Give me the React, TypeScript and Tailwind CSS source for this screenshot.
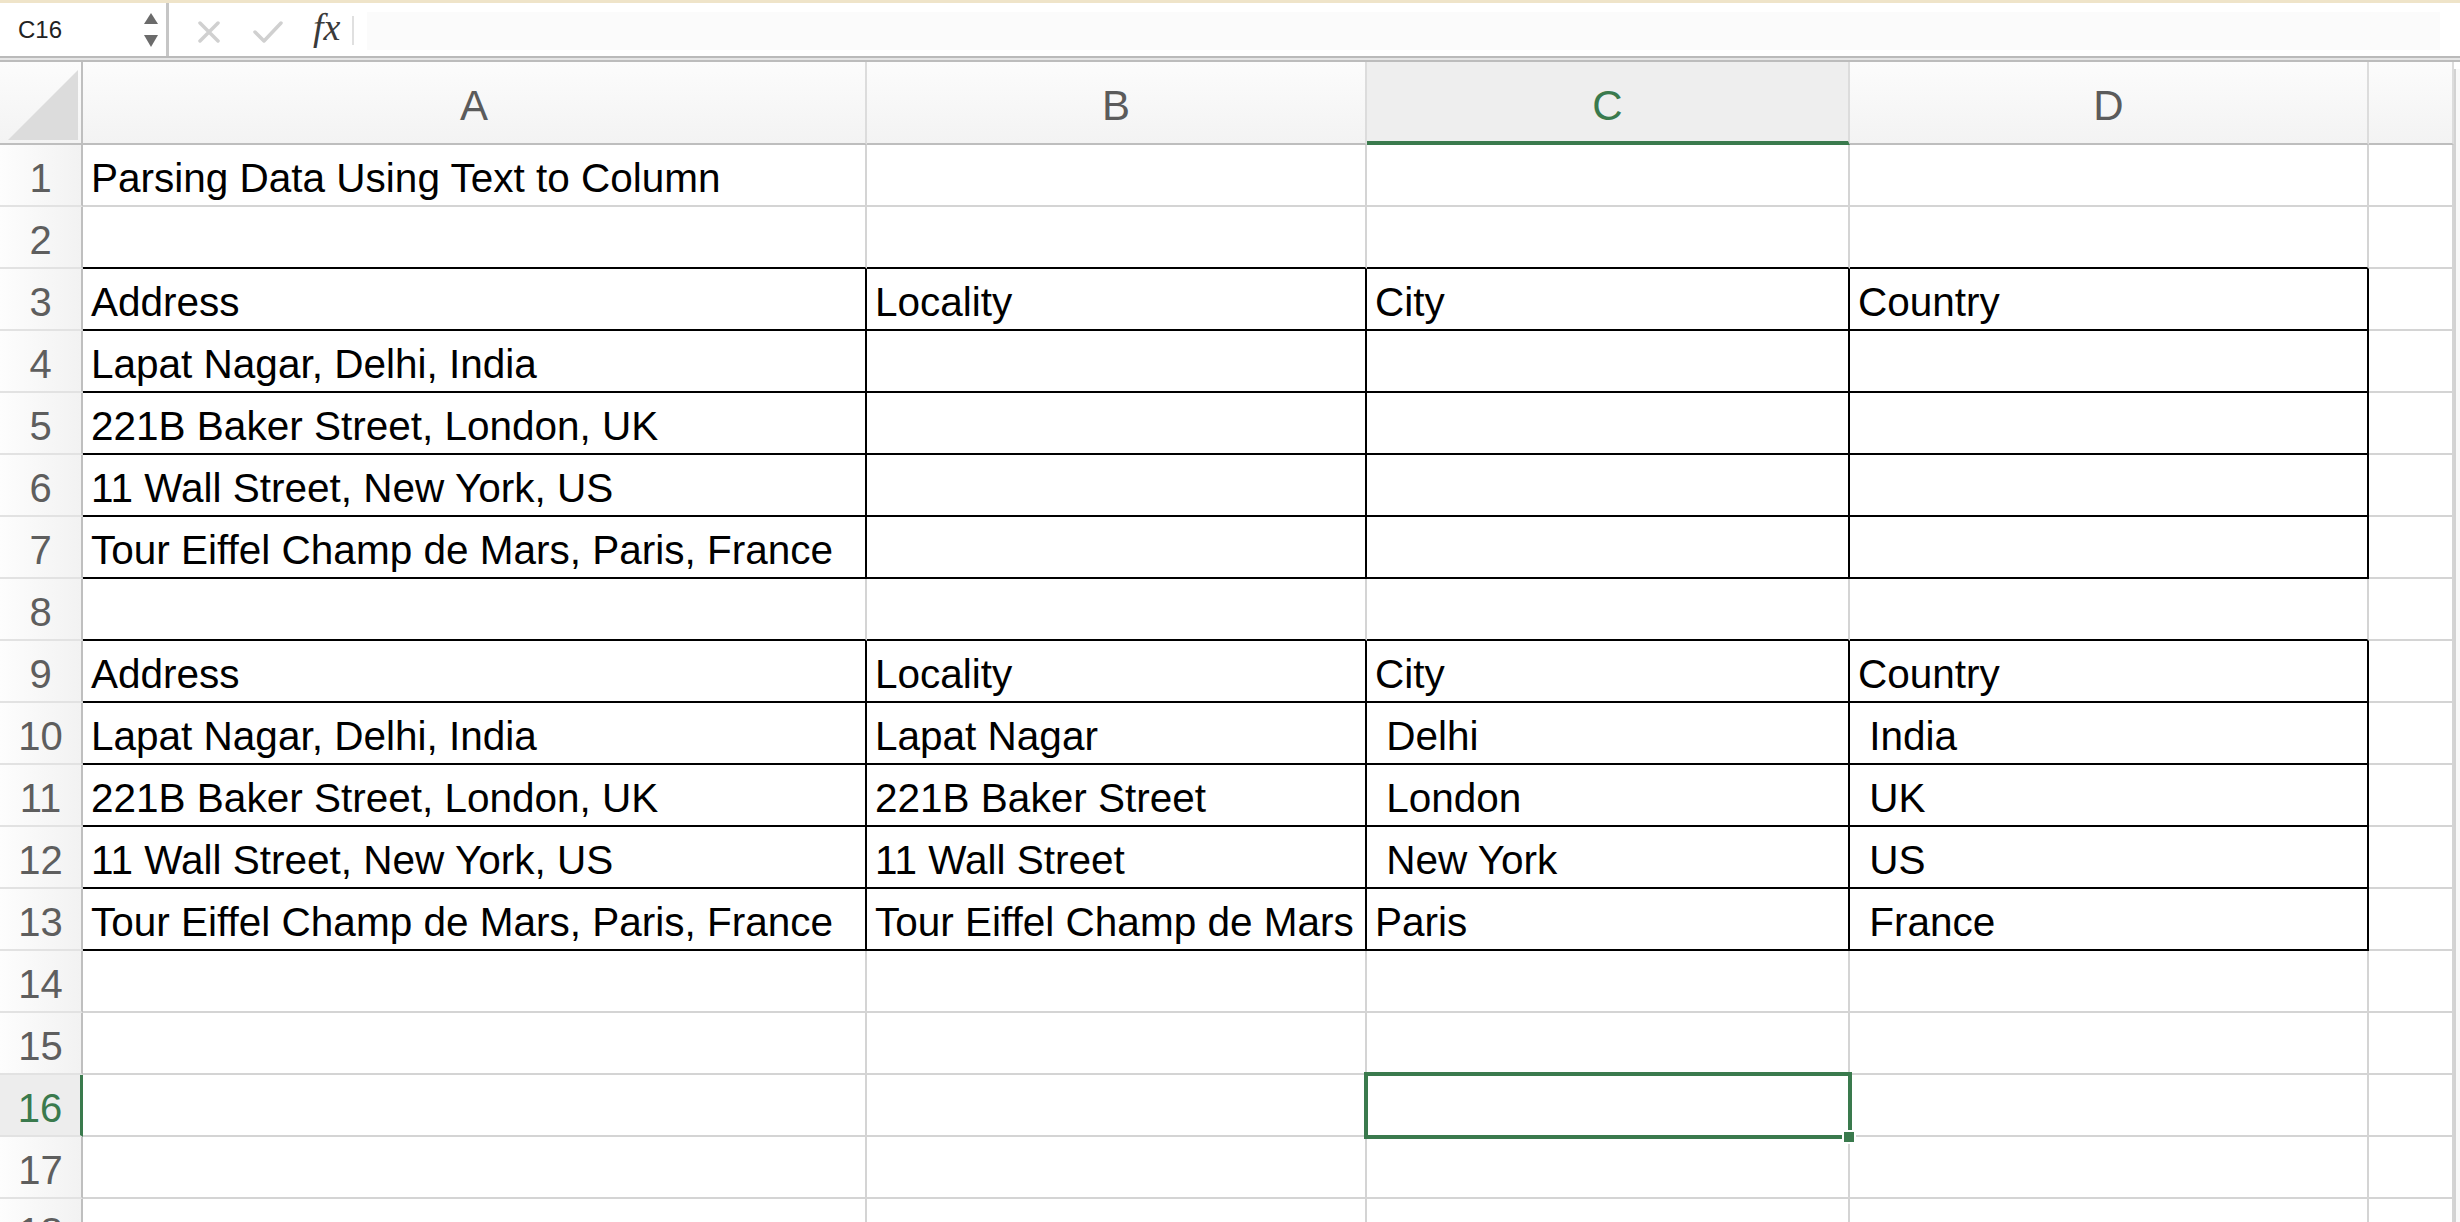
import React from 'react';

const GREEN = 'text-[#3a7a4d]';

const COLS = [
    { key: 'A', w: 'w-[784px]' },
    { key: 'B', w: 'w-[500px]' },
    { key: 'C', w: 'w-[483px]' },
    { key: 'D', w: 'w-[519px]' },
    { key: 'E', w: 'w-[85px]' },
];

const HEAD = ['Address', 'Locality', 'City', 'Country'];

const DATA: Record<number, string[]> = {
    1: ['Parsing Data Using Text to Column'],
    3: HEAD,
    4: ['Lapat Nagar, Delhi, India'],
    5: ['221B Baker Street, London, UK'],
    6: ['11 Wall Street, New York, US'],
    7: ['Tour Eiffel Champ de Mars, Paris, France'],
    9: HEAD,
    10: ['Lapat Nagar, Delhi, India', 'Lapat Nagar', ' Delhi', ' India'],
    11: ['221B Baker Street, London, UK', '221B Baker Street', ' London', ' UK'],
    12: ['11 Wall Street, New York, US', '11 Wall Street', ' New York', ' US'],
    13: ['Tour Eiffel Champ de Mars, Paris, France', 'Tour Eiffel Champ de Mars', 'Paris', ' France'],
};

const TABLE_ROWS = [3, 4, 5, 6, 7, 9, 10, 11, 12, 13];
const ROWS = Array.from({ length: 18 }, (_, i) => i + 1);

const Toolbar: React.FC = () => (
    <div className="flex h-[53px] bg-white">
        <div className="relative w-[169px] shrink-0 border-r-[3px] border-r-[#c6c6c6] pl-[18px] flex items-center">
            <span className="text-[24px] text-[#222] leading-none">C16</span>
            <svg className="absolute left-[144px] top-[10px]" width="14" height="34" viewBox="0 0 14 34">
                <polygon points="0,11 7,0 14,11" fill="#6b6b6b" />
                <polygon points="0,22 14,22 7,34" fill="#6b6b6b" />
            </svg>
        </div>
        <svg className="ml-[29px] mt-[18px] shrink-0" width="22" height="22" viewBox="0 0 22 22">
            <path d="M2 2 L20 20 M20 2 L2 20" stroke="#d0d0d0" strokeWidth="3.5" strokeLinecap="round" />
        </svg>
        <svg className="ml-[33px] mt-[18px] shrink-0" width="30" height="22" viewBox="0 0 30 22">
            <path d="M2 11 L11 20 L28 2" stroke="#d0d0d0" strokeWidth="3.5" fill="none" strokeLinecap="round" strokeLinejoin="round" />
        </svg>
        <span className="ml-[30px] mt-[5px] text-[38px] leading-[38px] italic text-[#3a3a3a] font-['Liberation_Serif',serif]">fx</span>
        <div className="ml-[12px] mt-[13px] w-[2px] h-[29px] bg-[#e0e0e0]" />
        <div className="ml-[13px] mr-[20px] mt-[9px] h-[38px] flex-1 bg-[#fbfbfb]" />
    </div>
);

const HeaderRow: React.FC = () => (
    <div className="flex h-[83px]">
        <div className="relative w-[83px] shrink-0 border-r-2 border-r-[#bfbfbf] border-b-2 border-b-[#bebebe] bg-linear-to-b from-[#fcfcfc] to-[#f3f3f3]">
            <svg className="absolute left-0 top-0" width="81" height="81" viewBox="0 0 81 81">
                <polygon points="8,78 78,8 78,78" fill="#dcdcdc" />
            </svg>
        </div>
        {COLS.map((c) =>
            c.key === 'C' ? (
                <div
                    key={c.key}
                    className={`${c.w} shrink-0 border-r-2 border-r-[#dcdcdc] border-b-4 border-b-[#3a7a4d] bg-[#eeeeee] flex justify-center`}
                >
                    <span className={`pt-[23px] text-[42px] leading-[42px] ${GREEN}`}>{c.key}</span>
                </div>
            ) : (
                <div
                    key={c.key}
                    className={`${c.w} shrink-0 border-r-2 border-r-[#dcdcdc] border-b-2 border-b-[#bebebe] bg-linear-to-b from-[#fcfcfc] to-[#f3f3f3] flex justify-center`}
                >
                    <span className="pt-[23px] text-[42px] leading-[42px] text-[#5b5b5b]">
                        {c.key === 'E' ? '' : c.key}
                    </span>
                </div>
            )
        )}
    </div>
);

const Cell: React.FC<{ row: number; col: number; w: string; text?: string }> = ({ row, col, w, text }) => {
    const inTable = TABLE_ROWS.includes(row) && col < 4;
    const aboveTable = (row === 2 || row === 8) && col < 4;
    const right = inTable ? 'border-r-black' : 'border-r-[#d4d4d4]';
    const bottom = inTable || aboveTable ? 'border-b-black' : 'border-b-[#d4d4d4]';
    const selected = row === 16 && col === 2;

    return (
        <div className={`${w} relative h-[62px] shrink-0 border-r-2 border-b-2 ${right} ${bottom}`}>
            {text && (
                <div className="pl-[8px] pt-[6px] leading-[54px] text-[40.5px] text-black whitespace-pre overflow-hidden">
                    {text}
                </div>
            )}
            {selected && (
                <>
                    <div className="absolute -left-[3px] -top-[3px] w-[488px] h-[67px] border-4 border-[#3a7a4d] z-10" />
                    <div className="absolute left-[475px] top-[55px] w-[14px] h-[14px] bg-[#3a7a4d] border-2 border-white z-20" />
                </>
            )}
        </div>
    );
};

const Row: React.FC<{ n: number }> = ({ n }) => {
    const active = n === 16;
    const values = DATA[n] ?? [];
    return (
        <div className="flex h-[62px]">
            <div
                className={
                    active
                        ? 'w-[83px] shrink-0 border-r-[3px] border-r-[#3a7a4d] border-b-2 border-b-[#e2e2e2] bg-[#ededed] text-center'
                        : 'w-[83px] shrink-0 border-r-2 border-r-[#bfbfbf] border-b-2 border-b-[#e2e2e2] bg-linear-to-r from-[#fdfdfd] to-[#f2f2f2] text-center'
                }
            >
                <span className={`block pt-[6px] leading-[54px] text-[40px] ${active ? GREEN : 'text-[#5e5e5e]'}`}>{n}</span>
            </div>
            {COLS.map((c, i) => (
                <Cell key={c.key} row={n} col={i} w={c.w} text={values[i]} />
            ))}
        </div>
    );
};

export default function App() {
    return (
        <div className="w-[2460px] h-[1222px] overflow-hidden bg-white font-['Liberation_Sans',Arial,sans-serif]">
            <div className="h-[3px] bg-[#efe4c9]" />
            <Toolbar />
            <div className="h-[6px] border-t-2 border-t-[#bababa] border-b-2 border-b-[#bcbcbc] bg-[#e6e6e6]" />
            <div className="flex">
                <div className="w-[2454px] shrink-0">
                    <HeaderRow />
                    {ROWS.map((n) => (
                        <Row key={n} n={n} />
                    ))}
                </div>
                <div className="mt-[7px] w-[6px] border-l-2 border-l-[#d2d2d2] bg-[#f9f9f9]" />
            </div>
        </div>
    );
}
